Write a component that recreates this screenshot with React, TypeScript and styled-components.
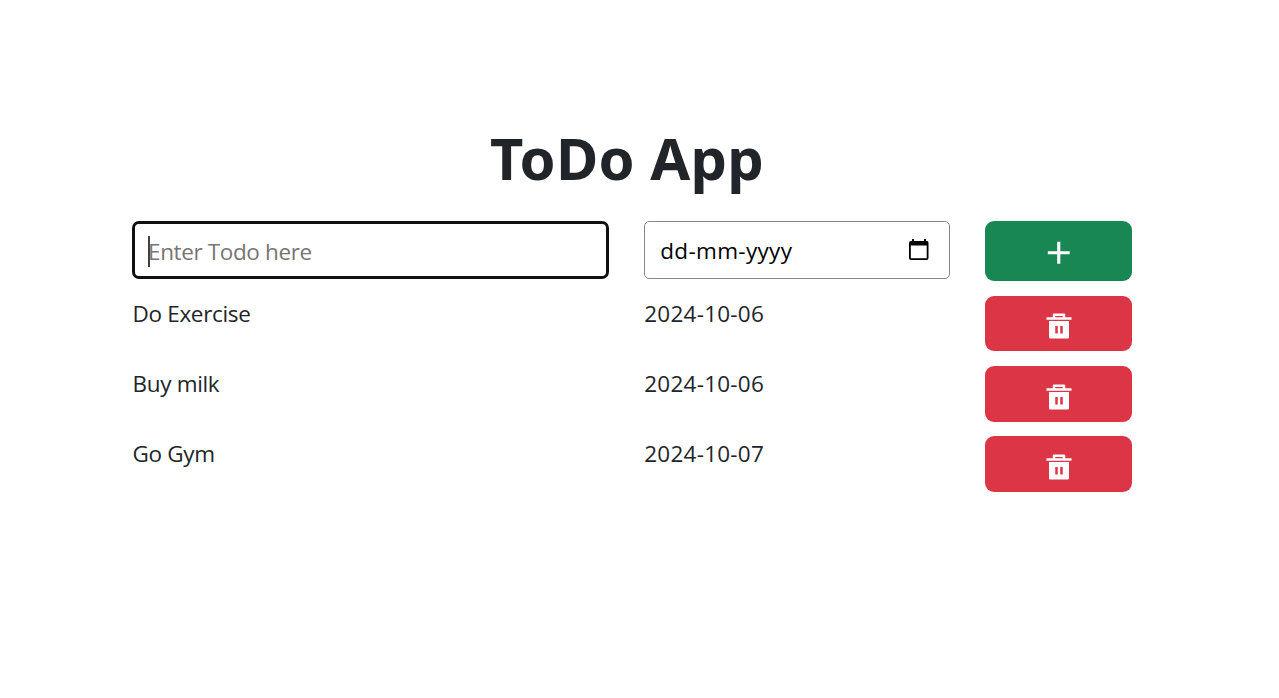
import React from "react";
import styled, { createGlobalStyle } from "styled-components";

const GlobalStyle = createGlobalStyle`
  *, *::before, *::after { box-sizing: border-box; }
  body {
    margin: 0;
    background: #fff;
    color: #212529;
    font-family: "Open Sans", "Noto Sans", sans-serif;
    font-size: 22.5px;
    line-height: 36px;
  }
`;

const Page = styled.main`
  width: 999px;
  margin-left: 132.5px;
  padding-top: 121.5px;
`;

const Title = styled.h1`
  margin: 0 0 27.5px;
  padding-right: 10px;
  height: 72px;
  font-family: "Noto Sans", sans-serif;
  font-size: 57.8px;
  font-weight: 700;
  letter-spacing: 0.25px;
  line-height: 72px;
  text-align: center;
  white-space: nowrap;
`;

const Row = styled.div<{ $height: number }>`
  display: grid;
  grid-template-columns: 476.5px 305.5px 146.5px;
  column-gap: 35.25px;
  align-items: start;
  height: ${(p) => p.$height}px;
`;

const TextField = styled.div`
  position: relative;
  height: 58px;
  margin-left: -0.5px;
  border: 3px solid #101010;
  border-radius: 7px;
`;

const TextInput = styled.input`
  width: 100%;
  height: 100%;
  padding: 3px 13px 0;
  border: 0;
  outline: 0;
  background: transparent;
  font: inherit;
  letter-spacing: -0.37px;
  &::placeholder { color: #757575; opacity: 1; }
`;

const Caret = styled.span`
  position: absolute;
  left: 13px;
  top: 12px;
  width: 2px;
  height: 31px;
  background: rgba(0, 0, 0, 0.75);
`;

const DateField = styled.div`
  display: flex;
  align-items: center;
  justify-content: space-between;
  height: 58px;
  padding: 2px 19.5px 0 15px;
  border: 1.5px solid #858585;
  border-radius: 5px;
  color: #000;
`;

const Label = styled.span<{ $spacing?: number }>`
  letter-spacing: ${(p) => p.$spacing ?? 0}px;
  white-space: nowrap;
`;

const Button = styled.button<{ $kind: "add" | "remove" }>`
  display: flex;
  align-items: center;
  justify-content: center;
  height: ${(p) => (p.$kind === "add" ? 60 : 55.8)}px;
  padding: ${(p) => (p.$kind === "add" ? 2.5 : 5.5)}px 0 0 1px;
  border: 0;
  border-radius: 9px;
  color: #fff;
  background: ${(p) => (p.$kind === "add" ? "#198754" : "#dc3545")};
`;

const CalendarSvg = styled.svg`
  display: block;
  margin-bottom: 2px;
`;

const CalendarIcon = () => (
  <CalendarSvg width="20" height="22" viewBox="0 0 20 22">
    <path fill="#000" fillRule="evenodd" d="M3 0h2v2h10V0h2v2h1q1.5 0 1.5 2v15q0 2-2 2H2q-2 0-2-2V4q0-2 2-2h1zM1.8 6.5v12.7h15.9V6.5z" />
  </CalendarSvg>
);

const PlusIcon = () => (
  <svg width="37.5" height="37.5" viewBox="0 0 24 24" fill="currentColor">
    <path d="M11 11V5h2v6h6v2h-6v6h-2v-6H5v-2z" />
  </svg>
);

const TrashIcon = () => (
  <svg width="30" height="30" viewBox="0 0 24 24" fill="currentColor">
    <path d="M4 8h16v13a1 1 0 0 1-1 1H5a1 1 0 0 1-1-1V8Zm3-3V3a1 1 0 0 1 1-1h8a1 1 0 0 1 1 1v2h5v2H2V5h5Zm2-1v1h6V4H9Zm0 8v6h2v-6H9Zm4 0v6h2v-6h-2Z" />
  </svg>
);

const todos = [
  { name: "Do Exercise", due: "2024-10-06" },
  { name: "Buy milk", due: "2024-10-06" },
  { name: "Go Gym", due: "2024-10-07" },
];

export default function App() {
  return (
    <>
      <GlobalStyle />
      <Page>
        <Title>ToDo App</Title>
        <Row $height={74.7}>
          <TextField>
            <TextInput placeholder="Enter Todo here" />
            <Caret />
          </TextField>
          <DateField>
            <Label $spacing={0.33}>dd-mm-yyyy</Label>
            <CalendarIcon />
          </DateField>
          <Button $kind="add" aria-label="Add"><PlusIcon /></Button>
        </Row>
        {todos.map((todo) => (
          <Row key={todo.name} $height={70.2}>
            <Label $spacing={-0.33}>{todo.name}</Label>
            <Label $spacing={0.24}>{todo.due}</Label>
            <Button $kind="remove" aria-label="Delete"><TrashIcon /></Button>
          </Row>
        ))}
      </Page>
    </>
  );
}
